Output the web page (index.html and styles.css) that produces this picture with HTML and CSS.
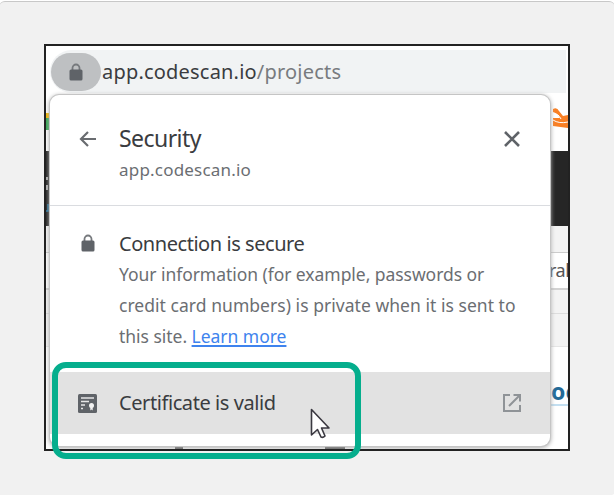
FILE: index.html
```
<!DOCTYPE html>
<html lang="en">
<head>
<meta charset="utf-8">
<title>Security</title>
<link rel="stylesheet" href="styles.css">
</head>
<body>
<main class="page">
  <div class="browser">
    <div class="viewport">
      <div class="address-bar">
        <span class="lock-pill"><svg class="lock" viewBox="0 0 14 18"><path d="M3.500 8V5a3.500 3.500 0 0 1 7 0v3" fill="none" stroke="#76797d" stroke-width="1.8"/><rect x=".5" y="6.500" width="13" height="11" rx="1.500" fill="#5f6368"/></svg></span>
        <span class="url"><span class="host">app.codescan.io</span><span class="path">/projects</span></span>
      </div>
      <div class="bookmarks">
        <span class="bookmark-green"></span>
        <svg class="bookmark-orange" viewBox="0 0 15 20"><path d="M0 1q4-2 6 2l4 5 5-1v13L0 18v-8l7 0Q4 5 0 4Z" fill="#f98025"/><path d="M1 6q4-1 7 5M0 12q6 4 15 2" fill="none" stroke="#fff" stroke-width="1"/></svg>
      </div>
      <div class="navbar"><svg class="nav-marks" viewBox="0 0 5 40"><path d="M1 3v3M1 11v5M4 9v2" stroke="#ddd" stroke-width="1.5"/><path d="M0 37h2v-7" fill="none" stroke="#2679a5" stroke-width="1.5"/></svg></div>
      <div class="spacer"></div>
      <div class="filter"><span>ral</span></div>
      <div class="strip"></div>
      <div class="strip strip-low"></div>
      <div class="content"><span class="project">oc</span></div>
      <div class="fragments"></div>
    </div>
    <section class="popup">
      <header class="popup-head">
        <svg class="back" viewBox="0 0 18 18"><path d="M17 9H2.500M9 2 2 9l7 7" fill="none" stroke="#696c70" stroke-width="2.200"/></svg>
        <div class="titles"><div class="title">Security</div><div class="site">app.codescan.io</div></div>
        <svg class="close" viewBox="0 0 18 18"><path d="m2 2 14 14M16 2 2 16" stroke="#5f6368" stroke-width="2.600"/></svg>
      </header>
      <div class="connection">
        <svg class="lock" viewBox="0 0 14 18"><path d="M3.500 8V5a3.500 3.500 0 0 1 7 0v3" fill="none" stroke="#76797d" stroke-width="1.8"/><rect x=".5" y="6.500" width="13" height="11" rx="1.500" fill="#5f6368"/></svg>
        <div class="details">
          <div class="label secure">Connection is secure</div>
          <div class="copy"><div class="line1">Your information (for example, passwords or</div><div class="line2">credit card numbers) is private when it is sent to</div><div class="line3">this site. <a>Learn more</a></div></div>
        </div>
      </div>
      <div class="certificate">
        <svg class="cert" viewBox="0 0 19 19"><rect width="19" height="19" rx="1.500" fill="#5f6368"/><path d="M3 4h13M3 7.500h8M3 11h4M3 14.500h2" stroke="#e6e6e6" stroke-width="1.500"/><circle cx="13.500" cy="11.500" r="2.500" fill="#f2f2f2"/><path d="M12.300 12h2.400v4.500l-1.200-1-1.200 1Z" fill="#f2f2f2"/></svg>
        <div class="label valid">Certificate is valid</div>
        <svg class="external" viewBox="0 0 18 18"><path d="M7 1H1v16h16v-6M10.500 1H17v6.500M17 1 6 12" fill="none" stroke="#8f9397" stroke-width="2"/></svg>
      </div>
    </section>
  </div>
  <div class="highlight"></div>
  <svg class="cursor" viewBox="0 0 20 31"><path d="M1.500 1.500v25.500l6-5.500 3.500 7.500q2 1 4-1l-3.500-8h7.500Z" fill="#fff" stroke="#3b3941" stroke-width="1.600" stroke-linejoin="round"/></svg>
</main>
</body>
</html>
```
FILE: styles.css
```
* { box-sizing: border-box; }
body { margin: 0; background: #fff; font-family: "Noto Sans", "Open Sans", sans-serif; }
svg { display: block; flex: none; }
.page { position: relative; width: 614px; height: 495px; padding: 44px 0 0 44px; overflow: hidden; }
.page::before { content: ""; position: absolute; z-index: -1; inset: 1px -1px 0; background: #f1f1f1; border-top: 1px solid #c8c8c8; border-radius: 6px 6px 4px 0; }
.browser { position: relative; width: 526px; height: 407px; border: 2px solid #222; background: #fff; overflow: hidden; }
.viewport { display: flex; flex-direction: column; height: 100%; }
.address-bar { display: flex; align-items: center; flex: none; height: 43px; margin: 4px 2px 0 4px; border-radius: 22px 0 0 22px; background: #f1f3f4; }
.lock-pill { display: flex; flex: none; align-items: center; justify-content: center; width: 50px; height: 38px; margin-left: 1px; border-radius: 19px; background: #bec0c2; }
.lock { width: 14px; height: 18px; }
.url { margin-left: 1px; font-size: 20px; line-height: 30px; white-space: nowrap; letter-spacing: .2px; }
.host { color: #3a3c40; }
.path { color: #787b7f; }
.bookmarks { display: flex; justify-content: space-between; flex: none; height: 58px; padding-top: 15px; }
.bookmark-green { width: 4px; height: 17px; margin-top: 5px; background: linear-gradient(#f5b900 5px, #34a853 5px); }
.bookmark-orange { width: 15px; height: 20px; }
.navbar { flex: none; height: 75px; padding-top: 23px; background: #262626; }
.nav-marks { width: 5px; height: 40px; }
.spacer { flex: none; height: 27px; background: #f3f3f3; border-bottom: 1px solid #ccc; }
.filter { flex: none; height: 37px; padding: 4px 0 0 503px; border-bottom: 2px solid #d2d2d2; color: #555; font-size: 18px; line-height: 27px; letter-spacing: -.5px; }
.strip { flex: none; height: 24px; background: #f3f3f3; border-bottom: 1px solid #ddd; }
.strip-low { height: 33px; border-color: #e5e5e5; }
.content { flex: 1; padding: 30px 0 0 505px; background: #fff; }
.project { display: block; height: 29px; border-bottom: 2px solid #c3dff1; color: #236a97; font-size: 23px; font-weight: 700; line-height: 28px; }
.fragments { flex: none; width: 335px; height: 2px; background: linear-gradient(90deg, transparent 129px, #555 129px 137px, transparent 137px 279px, #555 279px 299px, transparent 299px); }
.popup { position: absolute; top: 49px; left: 4px; width: 500px; height: 351px; border-radius: 9px; background: #fff; box-shadow: 0 0 0 1px #c5c5c5, 0 1px 4px 1px #aaa; }
.popup-head { display: flex; height: 111px; padding: 27px 29px 0 29px; border-bottom: 1px solid #dadce0; }
.back, .close { width: 18px; height: 18px; margin-top: 8px; }
.titles { flex: 1; margin-left: 22px; white-space: nowrap; }
.title { color: #3a3c40; font-size: 23px; line-height: 32px; letter-spacing: -.55px; }
.site { margin-top: 4px; color: #6b6e72; font-size: 17px; line-height: 24px; letter-spacing: .2px; }
.connection { display: flex; height: 166px; padding: 23px 0 0 31px; }
.connection .lock { margin-top: 5px; }
.details { margin-left: 24px; white-space: nowrap; }
.label { color: #3a3c40; font-size: 20px; line-height: 30px; }
.secure { letter-spacing: -.45px; }
.copy { color: #6b6e72; font-size: 17.500px; line-height: 31px; }
.line1 { letter-spacing: -.05px; }
.line2 { letter-spacing: .04px; }
.line3 { letter-spacing: -.03px; }
.copy a { color: #3e83ee; text-decoration: underline; text-decoration-thickness: 2px; text-underline-offset: 2px; }
.certificate { display: flex; align-items: center; height: 62px; padding: 0 29px 0 28px; background: #e2e2e2; }
.cert { width: 19px; height: 19px; }
.valid { flex: 1; margin-left: 22px; letter-spacing: -.42px; }
.external { width: 18px; height: 18px; }
.highlight { position: absolute; left: 52px; top: 362px; width: 309px; height: 97px; border: 6px solid #05ae8d; border-radius: 14px; }
.cursor { position: absolute; left: 310px; top: 408px; width: 20px; height: 31px; }
```
